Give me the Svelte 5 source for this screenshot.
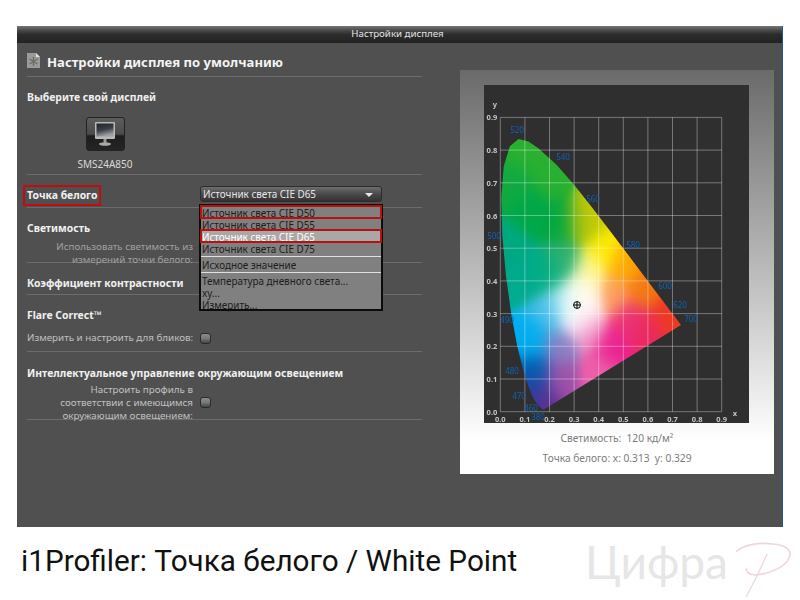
<script lang="ts">
	import { onMount } from 'svelte';

	const xTicks = [0, 1, 2, 3, 4, 5, 6, 7, 8, 9];
	const yTicks = [0, 1, 2, 3, 4, 5, 6, 7, 8, 9];

	// plot origin inside the dark box
	const X0 = 16.3;
	const Y0 = 326.7;
	const SX = 246;
	const SY = 327;

	const locus = [
		[0.1741, 0.005], [0.1566, 0.0177], [0.144, 0.0297], [0.1355, 0.0399], [0.1241, 0.0578],
		[0.1096, 0.0868], [0.0913, 0.1327], [0.0687, 0.2007], [0.0454, 0.295], [0.0235, 0.4127],
		[0.0082, 0.5384], [0.0039, 0.6548], [0.0139, 0.7502], [0.0389, 0.812], [0.0743, 0.8338],
		[0.1142, 0.8262], [0.1547, 0.8059], [0.2296, 0.7543], [0.3016, 0.6923], [0.3731, 0.6245],
		[0.4441, 0.5547], [0.5125, 0.4866], [0.5752, 0.4242], [0.627, 0.3725], [0.6658, 0.334],
		[0.6915, 0.3083], [0.7079, 0.292], [0.7347, 0.2653]
	];

	const anchors = [
		[0.1, 0.8, 0x2a, 0xb0, 0x30], [0.2, 0.72, 0x28, 0xb0, 0x30], [0.05, 0.7, 0x10, 0xaa, 0x40],
		[0.12, 0.62, 0x00, 0xa8, 0x48], [0.25, 0.58, 0x00, 0xa6, 0x40], [0.03, 0.5, 0x00, 0xa8, 0x80],
		[0.1, 0.42, 0x00, 0xab, 0x8e], [0.2, 0.42, 0x00, 0xad, 0x80], [0.26, 0.46, 0x30, 0xb0, 0x70],
		[0.33, 0.58, 0xa8, 0xc0, 0x10], [0.38, 0.6, 0xc8, 0xcc, 0x00], [0.42, 0.5, 0xff, 0xee, 0x00],
		[0.36, 0.43, 0xff, 0xf8, 0x90], [0.5, 0.45, 0xff, 0xaa, 0x00], [0.58, 0.38, 0xf4, 0x78, 0x10],
		[0.68, 0.29, 0xee, 0x3a, 0x20], [0.46, 0.36, 0xfc, 0xa0, 0x60], [0.32, 0.34, 0xff, 0xff, 0xff],
		[0.3, 0.3, 0xff, 0xff, 0xff], [0.34, 0.31, 0xff, 0xf4, 0xf8], [0.33, 0.37, 0xff, 0xff, 0xe0],
		[0.26, 0.34, 0xc0, 0xf0, 0xf4], [0.2, 0.3, 0x40, 0xbc, 0xec], [0.13, 0.22, 0x00, 0xae, 0xef],
		[0.14, 0.12, 0x00, 0x5c, 0xb0], [0.14, 0.05, 0x2a, 0x3c, 0x98], [0.175, 0.02, 0x6a, 0x2c, 0x90],
		[0.24, 0.1, 0xa0, 0x50, 0xa8], [0.24, 0.2, 0x8a, 0x80, 0xc4], [0.36, 0.25, 0xf0, 0x90, 0xc4],
		[0.45, 0.2, 0xea, 0x20, 0x90], [0.4, 0.12, 0xee, 0x60, 0xaa], [0.6, 0.24, 0xea, 0x28, 0x60],
		[0.52, 0.28, 0xec, 0x30, 0x78]
	];

	const waves = [
		['520', 33, 45], ['540', 79, 72], ['560', 109, 114], ['500', 10, 151], ['580', 149, 160],
		['600', 181, 201], ['620', 196, 220], ['700', 207, 234], ['490', 23, 235], ['480', 28, 286],
		['470', 35, 311], ['460', 47, 323], ['380', 54, 332]
	];

	let canvas: HTMLCanvasElement;

	onMount(() => {
		const ctx = canvas.getContext('2d');
		const w = canvas.width;
		const h = canvas.height;
		const mask = document.createElement('canvas');
		mask.width = w;
		mask.height = h;
		const m = mask.getContext('2d');
		m.beginPath();
		locus.forEach(([x, y], i) => {
			const px = X0 + x * SX;
			const py = Y0 - y * SY;
			if (i) m.lineTo(px, py);
			else m.moveTo(px, py);
		});
		m.closePath();
		m.fill();
		const alpha = m.getImageData(0, 0, w, h).data;
		const img = ctx.createImageData(w, h);
		for (let py = 0; py < h; py++) {
			for (let px = 0; px < w; px++) {
				const i = (py * w + px) * 4;
				if (!alpha[i + 3]) continue;
				const x = (px - X0) / SX;
				const y = (Y0 - py) / SY;
				let sum = 0, r = 0, g = 0, b = 0;
				for (const a of anchors) {
					const d = (x - a[0]) ** 2 + ((y - a[1]) * 1.1) ** 2;
					const k = Math.exp(-d / 0.0038) + 1e-9;
					sum += k;
					r += a[2] * k;
					g += a[3] * k;
					b += a[4] * k;
				}
				img.data[i] = r / sum;
				img.data[i + 1] = g / sum;
				img.data[i + 2] = b / sum;
				img.data[i + 3] = alpha[i + 3];
			}
		}
		ctx.putImageData(img, 0, 0);
	});
</script>

<div class="page">
	<div class="window">
		<div class="titlebar">Настройки дисплея</div>
		<div class="content">
			<div class="settings">
				<header>
					<svg class="doc" width="13" height="15" viewBox="0 0 13 15">
						<path d="M0 0H9L13 4V15H0Z" fill="#9a9a9a" />
						<path d="M9 0L13 4H9Z" fill="#e0e0e0" />
						<path d="M6.5 4V13M2.5 6L10.5 11M2.5 11L10.5 6" stroke="#6c6c6c" stroke-width="1.4" />
					</svg>
					<h1>Настройки дисплея по умолчанию</h1>
				</header>

				<section class="display">
					<h2>Выберите свой дисплей</h2>
					<div class="device">
						<div class="device-btn">
							<svg width="24" height="26" viewBox="0 0 24 26">
								<defs>
									<linearGradient id="screen" x1="0" y1="0" x2="0.3" y2="1">
										<stop offset="0" stop-color="#20242a" />
										<stop offset="0.55" stop-color="#3c4046" />
										<stop offset="1" stop-color="#9ca0a4" />
									</linearGradient>
								</defs>
								<rect x="2" y="1" width="20" height="17" rx="1" fill="#b8b8b8" />
								<rect x="3.5" y="2.5" width="17" height="13" fill="url(#screen)" />
								<rect x="10.5" y="18" width="3" height="4" fill="#999" />
								<ellipse cx="12" cy="23" rx="6" ry="1.8" fill="#aaa" />
							</svg>
						</div>
						<span>SMS24A850</span>
					</div>
				</section>

				<section class="white-point">
					<h2 class="marked">Точка белого</h2>
					<div class="select">
						<span>Источник света CIE D65</span>
						<i class="arrow"></i>
					</div>
					<ul class="menu">
						<li class="picked">Источник света CIE D50</li>
						<li>Источник света CIE D55</li>
						<li class="picked current">Источник света CIE D65</li>
						<li>Источник света CIE D75</li>
						<li class="sep"></li>
						<li>Исходное значение</li>
						<li class="sep"></li>
						<li>Температура дневного света...</li>
						<li>xy...</li>
						<li>Измерить...</li>
					</ul>
				</section>

				<section class="luminance">
					<h2>Светимость</h2>
					<p class="label">Использовать светимость из<br />измерений точки белого:</p>
				</section>

				<section class="contrast">
					<h2>Коэффициент контрастности</h2>
				</section>

				<section class="flare">
					<h2>Flare Correct™</h2>
					<div class="option">
						<p class="label">Измерить и настроить для бликов:</p>
						<i class="check"></i>
					</div>
				</section>

				<section class="ambient">
					<h2>Интеллектуальное управление окружающим освещением</h2>
					<div class="option">
						<p class="label">Настроить профиль в<br />соответствии с имеющимся<br />окружающим освещением:</p>
						<i class="check"></i>
					</div>
				</section>
			</div>

			<aside class="chart">
				<div class="plot">
					<canvas bind:this={canvas} width="265" height="338"></canvas>
					<svg class="overlay" width="265" height="338" viewBox="0 0 265 338">
						{#each xTicks as t}
							<line x1={X0 + t * 24.6} x2={X0 + t * 24.6} y1={Y0 - 294.3} y2={Y0} class="grid" />
							<text x={X0 + t * 24.6} y={Y0 + 10} class="tick" text-anchor="middle">0.{t}</text>
						{/each}
						{#each yTicks as t}
							<line x1={X0} x2={X0 + 221.4} y1={Y0 - t * 32.7} y2={Y0 - t * 32.7} class="grid" />
							<text x={X0 - 3} y={Y0 - t * 32.7 + 3} class="tick" text-anchor="end">0.{t}</text>
						{/each}
						<text x="11" y="22" class="tick" text-anchor="middle">y</text>
						<text x="251" y="331" class="tick" text-anchor="middle">x</text>
						{#each waves as [label, x, y]}
							<text {x} y={+y + 3} class="wave" text-anchor="middle">{label}</text>
						{/each}
						<g class="target">
							<circle cx="93" cy="220" r="3.4" />
							<path d="M89.6 220H96.4M93 216.6V223.4" />
						</g>
					</svg>
				</div>
				<p>Светимость:&nbsp; 120 кд/м²</p>
				<p>Точка белого: x: 0.313&nbsp; y: 0.329</p>
			</aside>
		</div>
	</div>

	<footer>
		<span class="caption">i1Profiler: Точка белого / White Point</span>
		<div class="logo">
			<span>Цифра</span>
			<svg width="64" height="62" viewBox="0 0 64 62">
				<path d="M3 12C10 5 25 2 40 4C52 5 60 10 56 18C52 28 35 34 22 35C15 35 12 30 14 28" fill="none" stroke="#eed6da" stroke-width="1.6" />
				<path d="M34 14C28 28 20 44 13 57" fill="none" stroke="#eed6da" stroke-width="1.3" />
			</svg>
		</div>
	</footer>
</div>

<style>
	:global(body) {
		background: #fff;
	}

	.page {
		width: 800px;
		height: 600px;
		overflow: hidden;
		padding: 26px 0 0 17px;
		box-sizing: border-box;
		font-family: 'Noto Sans', sans-serif;
	}

	.window {
		width: 766px;
		height: 501px;
		background: #505050;
		border-right: 1px solid #1558a8;
		box-sizing: border-box;
	}

	.titlebar {
		height: 17px;
		line-height: 16px;
		background: linear-gradient(#777 0, #4a4a4a 25%, #2c2c2c 50%, #222 100%);
		color: #e4e4e4;
		font-size: 9.7px;
		text-align: center;
		padding-right: 4px;
	}

	.content {
		display: flex;
	}

	.settings {
		width: 395px;
		margin-left: 10px;
		position: relative;
	}

	header {
		display: flex;
		align-items: center;
		gap: 7px;
		border-bottom: 1px solid #6c6c6c;
		padding-top: 5px;
		height: 28px;
	}

	.doc {
		flex: none;
		margin-top: -3px;
	}

	h1 {
		margin: 0;
		font-size: 13.1px;
		font-weight: 700;
		color: #f4f4f4;
	}

	section {
		border-bottom: 1px solid #6c6c6c;
		box-sizing: border-box;
		position: relative;
	}

	h2 {
		margin: 0;
		font-size: 10.4px;
		line-height: 14px;
		font-weight: 700;
		color: #f0f0f0;
	}

	.label {
		margin: 0;
		width: 166px;
		flex: none;
		font-size: 9.8px;
		line-height: 12.5px;
		color: #c0c0c0;
		text-align: right;
		white-space: nowrap;
	}

	.display {
		height: 98px;
		padding-top: 13px;
	}

	.device {
		width: 60px;
		margin: 13px 0 0 48px;
		display: flex;
		flex-direction: column;
		align-items: center;
		gap: 6px;
		color: #d8d8d8;
		font-size: 10px;
		line-height: 14px;
	}

	.device-btn {
		width: 39px;
		height: 34px;
		flex: none;
		box-sizing: border-box;
		border: 1px solid #222;
		border-radius: 3px;
		background: linear-gradient(#5c5c5c 0, #4c4c4c 50%, #1e1e1e 56%, #242424 100%);
		display: flex;
		align-items: center;
		justify-content: center;
	}

	.white-point {
		height: 33px;
		padding-top: 14px;
	}

	.marked {
		width: max-content;
		line-height: 13px;
		outline: 2px solid #c00d0d;
		outline-offset: 2px;
	}

	.select {
		position: absolute;
		left: 173px;
		top: 11px;
		width: 182px;
		height: 16px;
		box-sizing: border-box;
		border: 1px solid #2c2c2c;
		border-radius: 3px;
		background: linear-gradient(#6e6e6e, #4a4a4a 50%, #333);
		color: #e8e8e8;
		font-size: 9.9px;
		line-height: 15px;
		padding-left: 2px;
	}

	.arrow {
		position: absolute;
		right: 8px;
		top: 6px;
		border: 4px solid transparent;
		border-top: 4px solid #e8e8e8;
		border-bottom: 0;
	}

	.menu {
		position: absolute;
		z-index: 2;
		left: 172px;
		top: 29px;
		width: 184px;
		height: 107px;
		box-sizing: border-box;
		margin: 0;
		padding: 0;
		list-style: none;
		background: #808080;
		border: 2px solid #0c0c0c;
		color: #1c1c1c;
		font-size: 9.9px;
		line-height: 14px;
	}

	.menu li {
		height: 12px;
		padding-left: 1px;
		white-space: nowrap;
	}

	.menu li.sep {
		height: 1px;
		margin: 2px 0 1px;
		padding: 0;
		background: #e0e0e0;
	}

	.menu li.picked {
		outline: 2px solid #c00d0d;
		outline-offset: -1px;
		position: relative;
	}

	.menu li.current {
		background: #a8a8a8;
		color: #fff;
	}

	.luminance {
		height: 55px;
		padding-top: 13px;
	}

	.luminance .label {
		margin-top: 6px;
		color: #a0a0a0;
	}

	.contrast {
		height: 32px;
		padding-top: 13px;
	}

	.flare {
		height: 57px;
		padding-top: 13px;
	}

	.option {
		display: flex;
		align-items: center;
		gap: 7px;
	}

	.flare .option {
		margin-top: 10px;
	}

	.ambient {
		height: 68px;
		padding-top: 14px;
	}

	.ambient .option {
		margin-top: 3px;
	}

	.ambient .label {
		line-height: 13px;
	}

	.check {
		width: 11px;
		height: 11px;
		flex: none;
		box-sizing: border-box;
		border: 1px solid #2a2a2a;
		border-radius: 3px;
		background: linear-gradient(#8c8c8c, #777 50%, #444);
	}

	.chart {
		width: 314px;
		height: 404px;
		margin: 27px 0 0 38px;
		box-sizing: border-box;
		padding-top: 15px;
		background: linear-gradient(#6a6a6a, #bbb 50%, #fff 92%);
		display: flex;
		flex-direction: column;
		align-items: center;
		color: #7c7c7c;
		font-size: 10.2px;
	}

	.chart p {
		margin: 0;
		line-height: 14px;
	}

	.chart p:nth-of-type(1) {
		margin-top: 8px;
	}

	.chart p:nth-of-type(2) {
		margin-top: 6px;
	}

	.plot {
		width: 265px;
		height: 338px;
		flex: none;
		background: #2f2f2f;
		position: relative;
		margin-left: -1px;
	}

	canvas,
	.overlay {
		position: absolute;
		left: 0;
		top: 0;
	}

	.grid {
		stroke: rgba(255, 255, 255, 0.35);
		stroke-width: 1;
	}

	.tick {
		fill: #c4c4c4;
		font-size: 7.5px;
		font-weight: 700;
	}

	.wave {
		fill: #0f62b4;
		font-size: 8px;
	}

	.target circle {
		fill: none;
		stroke: #000;
		stroke-width: 1;
	}

	.target path {
		stroke: #000;
		stroke-width: 1;
	}

	footer {
		display: flex;
		align-items: center;
		height: 66px;
		margin-left: 4px;
	}

	.caption {
		font-family: Roboto, sans-serif;
		font-size: 29.7px;
		color: #111;
		white-space: nowrap;
	}

	.logo {
		position: absolute;
		left: 585px;
		top: 532px;
		display: flex;
		align-items: flex-start;
	}

	.logo span {
		font-family: Lato, sans-serif;
		font-weight: 400;
		font-size: 46px;
		line-height: 60px;
		color: #e6e6e6;
	}

	.logo svg {
		position: absolute;
		left: 148px;
		top: 8px;
	}
</style>
